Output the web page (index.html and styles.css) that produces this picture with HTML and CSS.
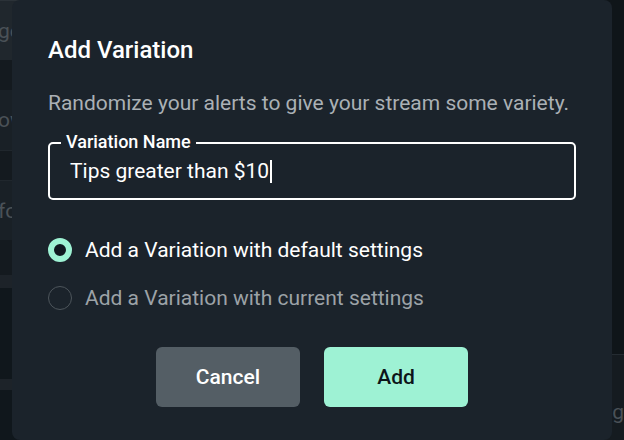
FILE: index.html
```html
<!DOCTYPE html>
<html lang="en">
<head>
<meta charset="utf-8">
<title>Add Variation</title>
<link rel="stylesheet" href="styles.css">
</head>
<body>
<div class="page">
  <div class="side-left">
    <div class="row row-a"><span class="ghost">ge</span></div>
    <div class="row row-dark h30"></div>
    <div class="row row-b"><span class="ghost">ow</span></div>
    <div class="row row-dark h30 sep"></div>
    <div class="row row-b sep"><span class="ghost">fo</span></div>
    <div class="row row-dark h35"></div>
    <div class="row band h13"></div>
    <div class="row deep h91"></div>
    <div class="row band h11"></div>
    <div class="row deep grow"></div>
  </div>
  <div class="side-right">
    <div class="r-top"></div>
    <div class="r-bottom"><span class="ghost">g</span></div>
  </div>
</div>

<div class="dialog" role="dialog" aria-labelledby="dlg-title">
  <h2 class="title" id="dlg-title">Add Variation</h2>
  <p class="subtitle">Randomize your alerts to give your stream some variety.</p>

  <div class="field">
    <span class="field-label">Variation Name</span>
    <div class="field-value">Tips greater than $10<span class="caret"></span></div>
  </div>

  <div class="options">
    <div class="option">
      <span class="radio radio-on"></span>
      <span class="opt-text">Add a Variation with default settings</span>
    </div>
    <div class="option option-off">
      <span class="radio"></span>
      <span class="opt-text">Add a Variation with current settings</span>
    </div>
  </div>

  <div class="actions">
    <button class="btn btn-cancel">Cancel</button>
    <button class="btn btn-add">Add</button>
  </div>
</div>
</body>
</html>
```

FILE: styles.css
```css
* { box-sizing: border-box; }

html, body {
  margin: 0;
  padding: 0;
  width: 624px;
  height: 440px;
  overflow: hidden;
  background: #111820;
  font-family: Roboto, "Noto Sans", sans-serif;
}

.page {
  display: flex;
  justify-content: space-between;
  width: 624px;
  height: 440px;
}

.side-left {
  width: 40px;
  display: flex;
  flex-direction: column;
  border-top: 1px solid #2b3238;
}

.row {
  display: flex;
  align-items: center;
  overflow: hidden;
}
.row-a { height: 59px; background: #20272d; }
.row-dark { background: #141a1f; }
.row-b { height: 60px; background: #192026; }
.sep { border-top: 1px solid #20272d; }
.h30 { height: 30px; }
.h35 { height: 35px; }
.h13 { height: 13px; }
.h11 { height: 11px; }
.h91 { height: 91px; }
.band { background: #1d2329; }
.deep { background: #10171c; }
.grow { flex: 1; }

.ghost {
  color: #4a5157;
  font-size: 21px;
  margin-left: -2px;
  white-space: nowrap;
}

.side-right {
  width: 40px;
  display: flex;
  flex-direction: column;
}
.r-top {
  height: 355px;
  background: #0f1519;
  border-bottom: 1px solid #242b31;
}
.r-bottom {
  flex: 1;
  background: #151b20;
  display: flex;
  align-items: flex-end;
  justify-content: flex-end;
  padding: 0 0 16px;
}
.r-bottom .ghost { margin-right: 0; }

.dialog {
  position: absolute;
  left: 12px;
  top: 0;
  width: 600px;
  height: 440px;
  background: #1b232b;
  border-radius: 8px;
  padding: 36px 36px 0;
  display: flex;
  flex-direction: column;
}

.title {
  margin: 0;
  font-size: 24px;
  line-height: 28px;
  font-weight: 500;
  color: #ffffff;
}

.subtitle {
  margin: 26px 0 0;
  font-size: 21px;
  line-height: 26px;
  color: #aab0b5;
}

.field {
  position: relative;
  margin-top: 26px;
  height: 58px;
  border: 2px solid #ffffff;
  border-radius: 5px;
  padding: 0 20px;
  display: flex;
  align-items: center;
}

.field-label {
  position: absolute;
  left: 11px;
  top: -12px;
  padding: 0 5px;
  background: #1b232b;
  color: #ffffff;
  font-size: 18px;
  line-height: 20px;
  font-weight: 500;
}

.field-value {
  display: flex;
  align-items: center;
  color: #ffffff;
  font-size: 21px;
  line-height: 26px;
}

.caret {
  display: inline-block;
  width: 2px;
  height: 23px;
  background: #ffffff;
  margin-left: 1px;
}

.options {
  margin-top: 26px;
  display: flex;
  flex-direction: column;
}

.option {
  height: 48px;
  display: flex;
  align-items: center;
  gap: 13px;
  color: #ffffff;
  font-size: 21px;
}
.option-off { color: #9ca2a7; }

.radio {
  width: 24px;
  height: 24px;
  border-radius: 50%;
  border: 1px solid #4d555b;
  flex: none;
}
.radio-on {
  border: 6px solid #9ef2d4;
  background: #101820;
}

.actions {
  margin-top: 25px;
  display: flex;
  justify-content: center;
  gap: 24px;
}

.btn {
  width: 144px;
  height: 60px;
  border: none;
  border-radius: 6px;
  font-family: Roboto, "Noto Sans", sans-serif;
  font-size: 21px;
  font-weight: 500;
  cursor: pointer;
}
.btn-cancel { background: #545e65; color: #ffffff; }
.btn-add { background: #9ef2d4; color: #0d1519; }
```
